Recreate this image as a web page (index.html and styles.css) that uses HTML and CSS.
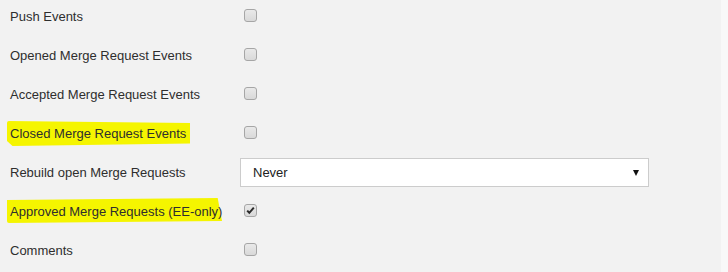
FILE: index.html
```html
<!DOCTYPE html>
<html>
<head>
<meta charset="utf-8">
<link rel="stylesheet" href="styles.css">
</head>
<body>
<div class="page">
  <div class="form">
    <div class="row"><span class="label">Push Events</span><span class="cb"></span></div>
    <div class="row"><span class="label">Opened Merge Request Events</span><span class="cb"></span></div>
    <div class="row"><span class="label">Accepted Merge Request Events</span><span class="cb"></span></div>
    <div class="row"><span class="label"><span class="hl hl-closed">Closed Merge Request Events</span></span><span class="cb"></span></div>
    <div class="row"><span class="label">Rebuild open Merge Requests</span>
      <div class="select"><span class="sel-text">Never</span><span class="arrow"></span></div>
    </div>
    <div class="row"><span class="label"><span class="hl hl-approved">Approved Merge Requests (EE-only)</span></span><span class="cb checked"><svg width="11" height="11" viewBox="0 0 11 11"><path d="M2.2 5.6 L4.3 7.8 L8.8 2.6" fill="none" stroke="#2b2b2b" stroke-width="2"/></svg></span></div>
    <div class="row"><span class="label">Comments</span><span class="cb"></span></div>
  </div>
  <div class="edge"></div>
</div>
</body>
</html>
```
FILE: styles.css
```css
html, body {
  margin: 0;
  padding: 0;
  background: #f2f2f2;
  overflow: hidden;
}
.page {
  display: flex;
  width: 728px;
  height: 272px;
}
.form {
  flex: 1;
  margin-top: -3px;
}
.edge {
  width: 7px;
  background: #f8f8f8;
}
.row {
  display: flex;
  align-items: center;
  height: 39px;
  padding-left: 10px;
  font-family: "Liberation Sans", Arial, sans-serif;
  font-size: 13px;
  color: #2e2e2e;
}
.label {
  width: 234px;
  flex: none;
}
.hl {
  position: relative;
  z-index: 0;
}
.hl::before {
  content: "";
  position: absolute;
  z-index: -1;
  background: #f5f500;
  border-radius: 2px;
}
.hl-closed::before {
  left: -3px;
  top: -5px;
  width: 183px;
  height: 25px;
  clip-path: polygon(0 0, 100% 2px, 100% 90%, 3% 100%, 0 80%);
}
.hl-approved::before {
  left: -3px;
  top: -6px;
  width: 215px;
  height: 25px;
  clip-path: polygon(0 8%, 98% 0, 100% 92%, 0 100%);
}
.cb {
  box-sizing: border-box;
  width: 13px;
  height: 13px;
  border: 1px solid #a6a6a6;
  border-radius: 3px;
  background: linear-gradient(#e9e9e9, #d9d9d9);
  display: flex;
  align-items: center;
  justify-content: center;
  margin-top: -2px;
}
.cb svg { display: block; }
.select {
  box-sizing: border-box;
  width: 409px;
  height: 29px;
  margin-left: -4px;
  background: #fff;
  border: 1px solid #cccccc;
  display: flex;
  align-items: center;
  padding-left: 12px;
  padding-right: 9px;
  color: #222;
}
.sel-text {
  flex: 1;
}
.arrow {
  width: 0;
  height: 0;
  border-left: 3px solid transparent;
  border-right: 3px solid transparent;
  border-top: 6px solid #111;
  margin-top: 1px;
}
```
